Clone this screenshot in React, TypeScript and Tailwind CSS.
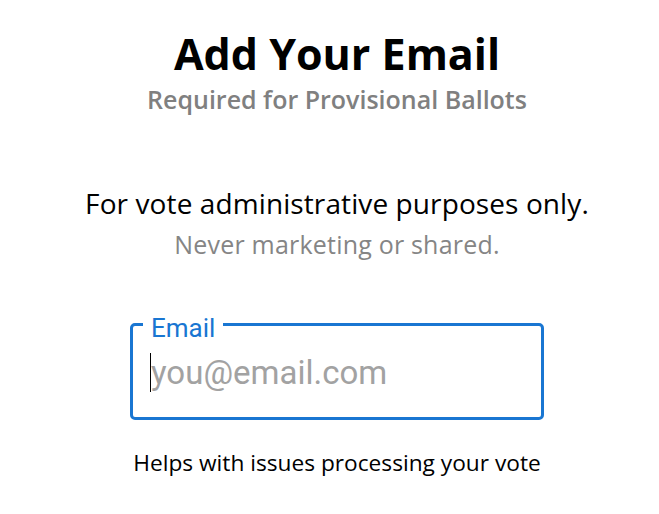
export default function App() {
  const sans = { fontFamily: '"Open Sans", "Noto Sans", sans-serif' };
  const roboto = { fontFamily: 'Roboto, "Liberation Sans", sans-serif' };
  return (
    <div className="flex h-[514px] w-[659px] flex-col items-center bg-white pl-[15px] text-black" style={sans}>
      <h1 className="mt-[28px] text-[43px] font-bold leading-[52px]">Add Your Email</h1>
      <p className="mt-[4px] text-[25px] font-semibold leading-[30px] text-[#808080]">Required for Provisional Ballots</p>

      <p className="mt-[72px] text-[28px] leading-[34px] tracking-[0.1px]">For vote administrative purposes only.</p>
      <p className="mt-[9px] text-[25px] leading-[30px] tracking-[0.2px] text-[#858585]">Never marketing or shared.</p>

      <div className="relative mt-[64px] h-[97px] w-[414px] rounded-[5px] border-[3px] border-[#1976d2] pl-[17px] pt-[27px]">
        <span
          className="absolute left-[10px] top-[-11px] bg-white px-[8px] text-[26px] leading-[26px] text-[#1976d2]"
          style={roboto}
        >
          Email
        </span>
        <div className="relative">
          <span className="absolute left-0 top-0 h-[39px] w-px bg-black" />
          <input
            type="email"
            placeholder="you@email.com"
            className="h-[39px] w-full bg-transparent pl-px text-[33px] leading-[39px] outline-none placeholder:text-[#a2a2a2]"
            style={roboto}
          />
        </div>
      </div>

      <p className="mt-[28px] text-[22.7px] leading-[30px]">Helps with issues processing your vote</p>
    </div>
  );
}
